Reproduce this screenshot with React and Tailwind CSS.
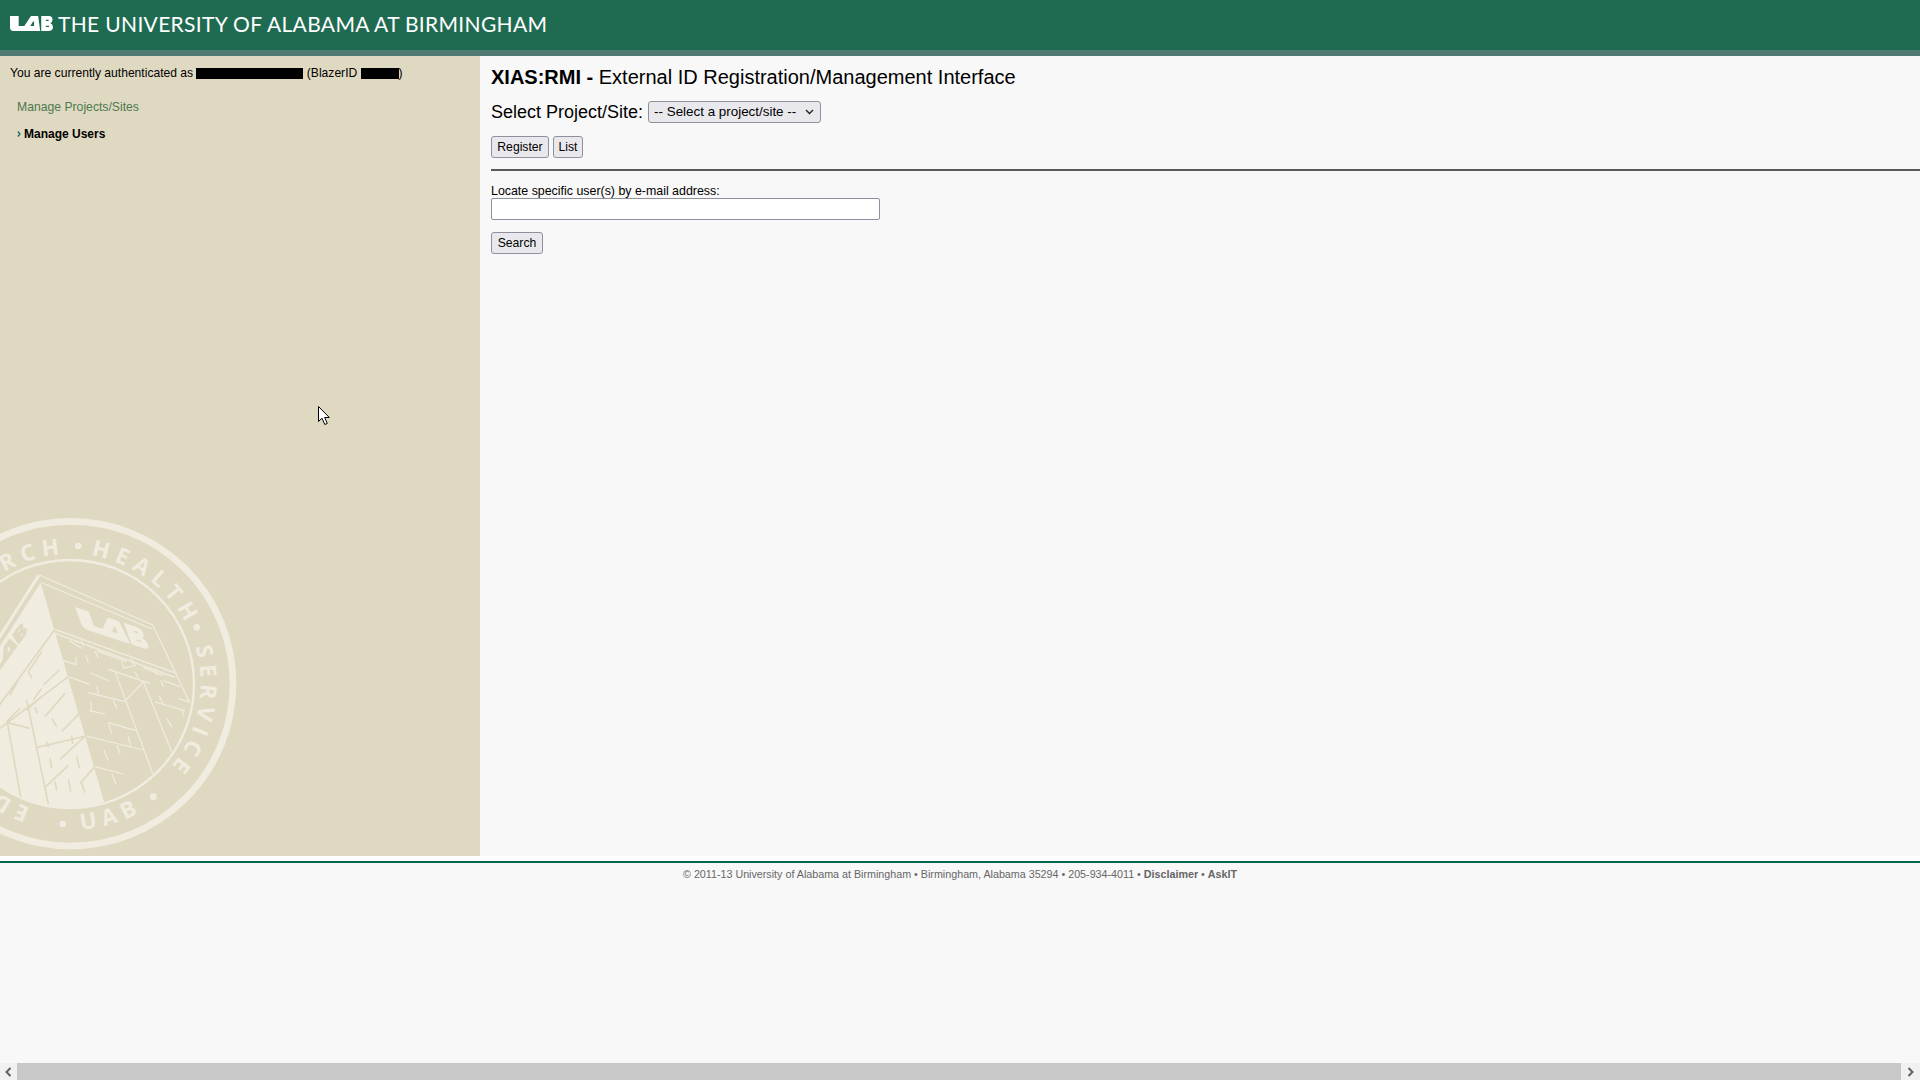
import React from 'react';

const SEAL_LIGHT = '#f0ece0';
const SAND = '#e0d9c1';
const GREEN = '#1f6b52';

// block logo, drawn in a 42x15 box
function UabLogoPaths({ fill, counter }) {
  return (
    <>
      <path fill={fill} d="M0 0H8.500V10H14L20.500 0H27.500L29.500 15H3.500Q0 15 0 11.500z" />
      <path fill={fill} d="M30.500 0H38Q41.500 0 41.500 3.700Q41.500 6.300 39.500 7.200Q42 8.200 42 11Q42 15 37.500 15H30.500z" />
      <path fill={counter} d="M22.500 5.500L19.800 10H23.500V5.500zM35 3.700H37.800V5H35zM35 9.800H38.200V11.100H35z" />
    </>
  );
}

function Seal() {
  // viewBox is in 3x units of the crop, easier to read coordinates off it
  const ring = 'M212 942A390 390 0 1 1 212 162A390 390 0 1 1 212 942';
  const lower = 'M-226 552A438 438 0 0 0 650 552';
  const labelProps = { fill: SEAL_LIGHT, fontFamily: 'Open Sans, sans-serif', fontWeight: 700, fontSize: 67, letterSpacing: 19 };

  return (
    <svg className="absolute bottom-0 left-0 h-[356px] w-[260px]" viewBox="0 0 780 1068" fill="none">
      <defs>
        <path id="sealRing" d={ring} />
        <path id="sealLower" d={lower} />
        <clipPath id="sealInner">
          <circle cx="210" cy="552" r="372" />
        </clipPath>
      </defs>
      <circle cx="212" cy="551" r="487" stroke={SEAL_LIGHT} strokeWidth="20" />
      <circle cx="210" cy="552" r="372" stroke={SEAL_LIGHT} strokeWidth="7" />
      <text {...labelProps}>
        <textPath href="#sealRing" startOffset="123">EDUCATION</textPath>
      </text>
      <text {...labelProps}>
        <textPath href="#sealRing" startOffset="718">RESEARCH</textPath>
      </text>
      <text {...labelProps}>
        <textPath href="#sealRing" startOffset="1286">HEALTH</textPath>
      </text>
      <text {...labelProps}>
        <textPath href="#sealRing" startOffset="1724">SERVICE</textPath>
      </text>
      <text {...labelProps} textAnchor="middle">
        <textPath href="#sealLower" startOffset="818">UAB</textPath>
      </text>
      <circle cx="235" cy="138" r="10" fill={SEAL_LIGHT} />
      <circle cx="590" cy="382" r="10" fill={SEAL_LIGHT} />
      <circle cx="460" cy="890" r="10" fill={SEAL_LIGHT} />
      <circle cx="188" cy="972" r="10" fill={SEAL_LIGHT} />

      <g clipPath="url(#sealInner)">
        {/* left face */}
        <polygon points="122,248 312,905 200,940 -20,940 -20,470" fill={SEAL_LIGHT} />
        <path d="M116 226L-20 440" stroke={SEAL_LIGHT} strokeWidth="9" />
        <g stroke={SAND} strokeWidth="5">
          <path d="M165 388L-20 640M205 530L0 685M22 668L90 685M22 668L62 890M80 600L145 912M178 510L130 555M100 600L125 565M195 580L135 650M238 640L185 695M256 708L180 778M258 708L112 742M205 796L135 862M285 800L240 850M150 775L155 805M230 770L238 805M165 845L170 872M205 838L212 875M245 850L255 878M215 708L218 732M155 655L170 680M140 725L145 742M105 620L112 640M125 455L85 515M85 515L96 535M60 530L30 585M125 590L80 630M60 625L20 665" />
        </g>
        <g transform="matrix(2.500 -3.450 1.300 1.950 -40 510)">
          <UabLogoPaths fill={SAND} counter={SEAL_LIGHT} />
        </g>
        {/* right face */}
        <g stroke={SEAL_LIGHT} strokeWidth="3.500">
          <path d="M118 225L458 375L570 610M125 248L458 388M165 388L530 520M165 400L525 532M205 530L268 553M345 515L458 820M430 545L515 755M378 600L430 545M325 508L450 550M258 708L430 750M285 800L370 822M265 578L375 605M268 632L315 642M465 606L555 632M490 542L540 560M535 596L568 606M270 518L326 542M290 452L380 485M430 503L490 526" />
          <path d="M208 422L245 445M245 420L250 440M285 452L295 475M365 485L372 505L408 495M393 475L402 495M465 505L470 525M190 482L228 494V470M257 465L265 488M405 515L415 535M482 540L490 560M478 588L490 612M545 628L552 650M500 655L515 682M290 560L295 580M340 600L350 625M272 605L275 632M325 668L335 700M325 668L408 692M385 710L392 740M350 735L360 760M312 750L325 782M335 820L348 852" />
        </g>
        <g transform="matrix(4.800 1.550 1.600 4.330 225 321)">
          <UabLogoPaths fill={SEAL_LIGHT} counter={SAND} />
        </g>
      </g>
    </svg>
  );
}

function Cursor() {
  return (
    <svg className="absolute left-[317px] top-[349px] h-[21px] w-[14px]" viewBox="0 0 14 21">
      <path d="M1.500 1.500V16.500L5 13.200L7.800 19.500L10.300 18.400L7.600 12.500H12.300z" fill="#ffffff" stroke="#000000" strokeWidth="1" />
    </svg>
  );
}

function Redacted({ className }) {
  return <span className={`inline-block h-[11px] bg-black align-[-2px] ${className}`} />;
}

function FormButton({ className, children }) {
  return (
    <button className={`h-[22px] rounded-[3px] border border-[#8f8f9d] bg-[#e9e9ed] text-[12.2px] leading-none text-black ${className}`}>
      {children}
    </button>
  );
}

function Scrollbar() {
  return (
    <div className="flex h-[17px] bg-[#f1f1f1]">
      <div className="flex w-[17px] items-center justify-center">
        <svg className="h-[10px] w-[7px]" viewBox="0 0 7 10">
          <path d="M5.500 1L1.500 5L5.500 9" fill="none" stroke="#606060" strokeWidth="2" />
        </svg>
      </div>
      <div className="flex-1 bg-[#c8c8c8]" />
      <div className="flex w-[19px] items-center justify-center">
        <svg className="h-[10px] w-[7px]" viewBox="0 0 7 10">
          <path d="M1.500 1L5.500 5L1.500 9" fill="none" stroke="#606060" strokeWidth="2" />
        </svg>
      </div>
    </div>
  );
}

export default function App() {
  return (
    <div className="flex h-screen flex-col overflow-hidden bg-[#f8f8f8] font-['Liberation_Sans',Arial,sans-serif] text-black">
      {/* Header */}
      <header className="flex h-[50px] items-center bg-[#1f6b52] pb-[3px] pl-[10px]">
        <svg className="mr-[5px] h-[15px] w-[43px]" viewBox="0 0 42 15" preserveAspectRatio="none">
          <UabLogoPaths fill="#ffffff" counter={GREEN} />
        </svg>
        <span className="font-['Lato',sans-serif] text-[21px] leading-none tracking-[0.33px] text-white">
          THE UNIVERSITY OF ALABAMA AT BIRMINGHAM
        </span>
      </header>
      <div className="h-[6px] bg-[#4f7a74]" />

      <div className="flex h-[800px]">
        {/* Sidebar */}
        <aside className="relative w-[480px] overflow-hidden bg-[#e0d9c1] pl-[10px] pt-[9px] text-[12px]">
          <p className="relative h-[16px] text-[12.1px] leading-[16px]">
            You are currently authenticated as <Redacted className="w-[107px]" /> (BlazerID <Redacted className="w-[38px]" />)
          </p>
          <nav className="relative mt-[18px] pl-[7px]">
            <a className="block h-[16px] text-[12.2px] leading-[16px] text-[#4c7a4f]">Manage Projects/Sites</a>
            <a className="mt-[11px] flex h-[16px] items-center font-bold leading-[16px]">
              <svg className="mr-[3px] h-[6px] w-[4px]" viewBox="0 0 4 6">
                <path d="M0.800 0.500L3 3L0.800 5.500" fill="none" stroke="#1f6b52" strokeWidth="1.300" />
              </svg>
              Manage Users
            </a>
          </nav>
          <Seal />
          <Cursor />
        </aside>

        {/* Main content */}
        <main className="flex-1 pl-[11px] pt-[8px]">
          <h1 className="h-[26px] text-[20px] leading-[26px]">
            <b>XIAS:RMI -</b> External ID Registration/Management Interface
          </h1>
          <div className="mt-[10px] flex h-[24px] items-center text-[18px]">
            Select Project/Site:
            <div className="relative ml-[5px] flex">
              <select className="h-[22px] w-[173px] appearance-none rounded-[3px] border border-[#8f8f9d] bg-[#e9e9ed] pl-[5px] text-[13.4px] text-black">
                <option>-- Select a project/site --</option>
              </select>
              <svg className="pointer-events-none absolute right-[7px] top-[8px] h-[6px] w-[9px]" viewBox="0 0 9 6">
                <path d="M1 1L4.500 4.500L8 1" fill="none" stroke="#222222" strokeWidth="1.400" />
              </svg>
            </div>
          </div>
          <div className="mt-[12px] flex gap-[4px]">
            <FormButton className="w-[58px]">Register</FormButton>
            <FormButton className="w-[30px]">List</FormButton>
          </div>
          <hr className="mt-[11px] h-[2px] border-0 bg-[#5a5a5a]" />
          <label className="mt-[13px] block h-[14px] text-[12.4px] leading-[14px]">Locate specific user(s) by e-mail address:</label>
          <input className="block h-[22px] w-[389px] rounded-[2px] border border-[#8f8f9d] bg-white" />
          <div className="mt-[12px] flex">
            <FormButton className="w-[52px]">Search</FormButton>
          </div>
        </main>
      </div>

      <div className="h-[5px] bg-white" />
      <div className="h-[2px] bg-[#00664f]" />

      {/* Footer */}
      <footer className="flex-1 pl-[683px] pt-[5px] text-[10.73px] leading-[12px] text-[#666666]">
        © 2011-13 University of Alabama at Birmingham • Birmingham, Alabama 35294 • 205-934-4011 • <b>Disclaimer</b> • <b>AskIT</b>
      </footer>
      <Scrollbar />
    </div>
  );
}
